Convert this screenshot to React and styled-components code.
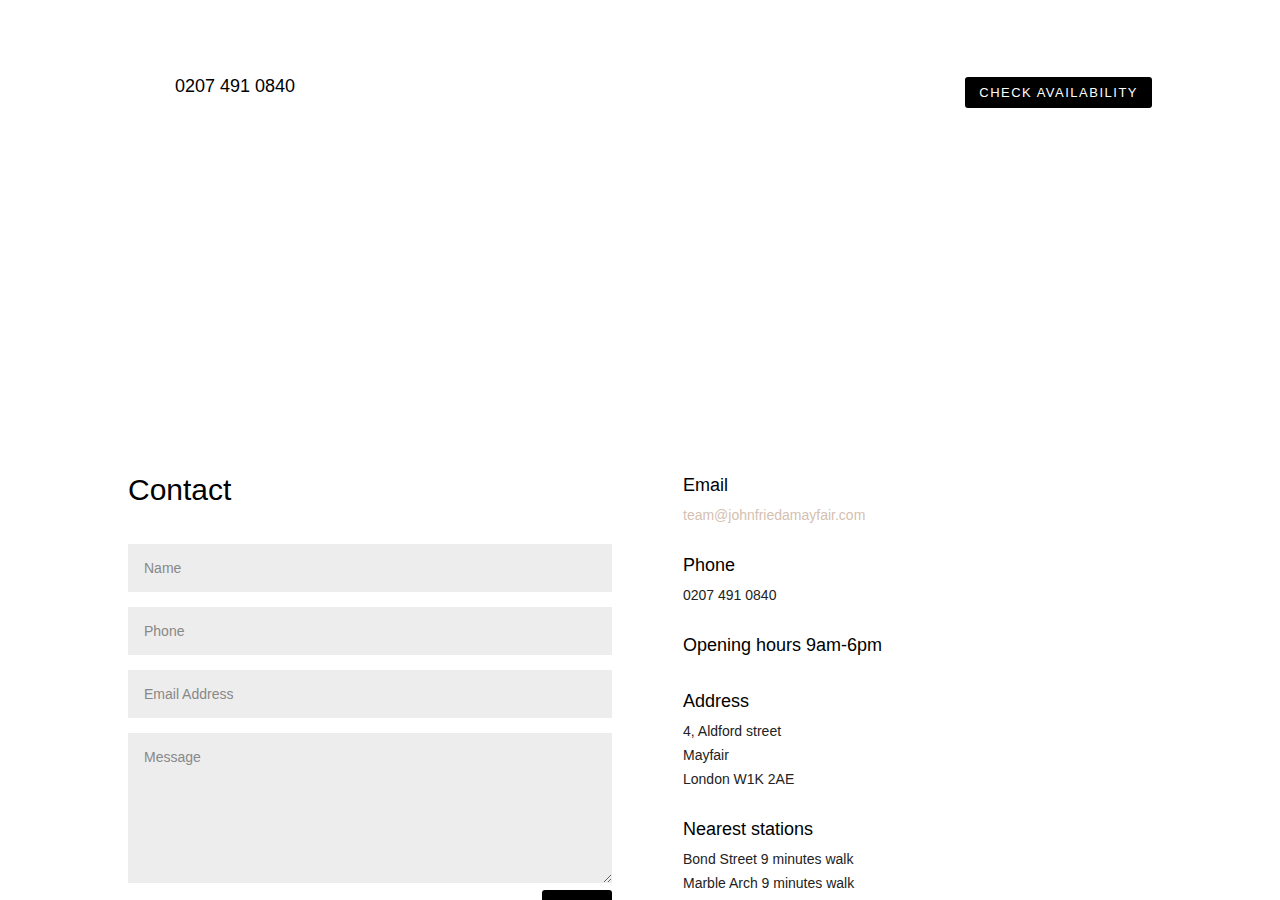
import React from "react";
import styled, { createGlobalStyle } from "styled-components";

const colors = {
  ink: "#000",
  text: "#222",
  muted: "#888",
  field: "#ededed",
  link: "#d4bfb1"
};

const GlobalStyle = createGlobalStyle`
  html, body {
    margin: 0;
    padding: 0;
    background: #fff;
    font-family: "Liberation Sans", Arial, sans-serif;
    color: ${colors.ink};
  }
`;

const Page = styled.div`
  width: 1024px;
  margin: 0 auto;
`;

const Header = styled.header`
  display: flex;
  align-items: flex-start;
  justify-content: space-between;

  padding-top: 77px;
  padding-left: 47px;
`;

const HeaderPhone = styled.a`
  font-size: 18px;
  line-height: 18px;
  color: ${colors.ink};
  text-decoration: none;
`;

const BlackButton = styled.button`
  box-sizing: border-box;
  height: ${p => p.$height || 31}px;
  min-width: ${p => p.$width || 0}px;
  padding: 0 14px;
  border: none;
  border-radius: 3px;

  background: ${colors.ink};
  color: #fff;

  font-family: inherit;
  font-size: 13px;
  letter-spacing: 1.5px;
  text-transform: uppercase;
  cursor: pointer;
`;

const Hero = styled.div`
  height: 367px;
`;

const ContactSection = styled.section`
  display: grid;
  grid-template-columns: 484px 1fr;
  column-gap: 71px;
`;

const FormColumn = styled.form`
  display: flex;
  flex-direction: column;
`;

const Title = styled.h2`
  margin: 0 0 39px;
  font-size: 30px;
  line-height: 30px;
  font-weight: 400;
`;

const Fields = styled.div`
  display: flex;
  flex-direction: column;
  gap: 15px;
`;

const Field = styled.input`
  box-sizing: border-box;
  width: 100%;
  height: 48px;
  padding: 0 16px;
  border: none;
  background: ${colors.field};

  font-family: inherit;
  font-size: 14px;
  color: ${colors.text};

  &::placeholder {
    color: ${colors.muted};
  }
`;

const MessageField = styled.textarea`
  box-sizing: border-box;
  width: 100%;
  height: 150px;
  padding: 16px;
  border: none;
  background: ${colors.field};

  font-family: inherit;
  font-size: 14px;
  line-height: 16px;
  color: ${colors.text};

  &::placeholder {
    color: ${colors.muted};
  }
`;

const SubmitRow = styled.div`
  display: flex;
  justify-content: flex-end;
  margin-top: 7px;
`;

const InfoColumn = styled.div`
  display: flex;
  flex-direction: column;
  gap: 29px;
  padding-top: 1px;
`;

const InfoBlock = styled.div`
  display: flex;
  flex-direction: column;
  gap: 9px;
  padding-bottom: ${p => (p.$tall ? 9 : 0)}px;
`;

const InfoHeading = styled.h3`
  margin: 0;
  font-size: 18px;
  line-height: 18px;
  font-weight: 400;
`;

const InfoLines = styled.div`
  font-size: 14px;
  line-height: 24px;
  color: ${colors.text};
`;

const InfoLink = styled.a`
  color: ${colors.link};
  text-decoration: none;
`;

const info = [
  {
    title: "Email",
    lines: [<InfoLink href="mailto:team@johnfriedamayfair.com">team@johnfriedamayfair.com</InfoLink>]
  },
  { title: "Phone", lines: ["0207 491 0840"] },
  { title: "Opening hours 9am-6pm", lines: [], tall: true },
  { title: "Address", lines: ["4, Aldford street", "Mayfair", "London W1K 2AE"] },
  {
    title: "Nearest stations",
    lines: ["Bond Street 9 minutes walk", "Marble Arch 9 minutes walk"]
  }
];

const App = () => (
  <>
    <GlobalStyle />
    <Page>
      <Header>
        <HeaderPhone href="tel:02074910840">0207 491 0840</HeaderPhone>
        <BlackButton>Check availability</BlackButton>
      </Header>

      <Hero />

      <ContactSection>
        <FormColumn onSubmit={e => e.preventDefault()}>
          <Title>Contact</Title>
          <Fields>
            <Field placeholder="Name" />
            <Field placeholder="Phone" />
            <Field placeholder="Email Address" />
            <MessageField placeholder="Message" />
          </Fields>
          <SubmitRow>
            <BlackButton $width={70} $height={44}>Send</BlackButton>
          </SubmitRow>
        </FormColumn>

        <InfoColumn>
          {info.map(block => (
            <InfoBlock key={block.title} $tall={block.tall}>
              <InfoHeading>{block.title}</InfoHeading>
              {block.lines.length > 0 && (
                <InfoLines>
                  {block.lines.map((line, i) => (
                    <div key={i}>{line}</div>
                  ))}
                </InfoLines>
              )}
            </InfoBlock>
          ))}
        </InfoColumn>
      </ContactSection>
    </Page>
  </>
);

export default App;
